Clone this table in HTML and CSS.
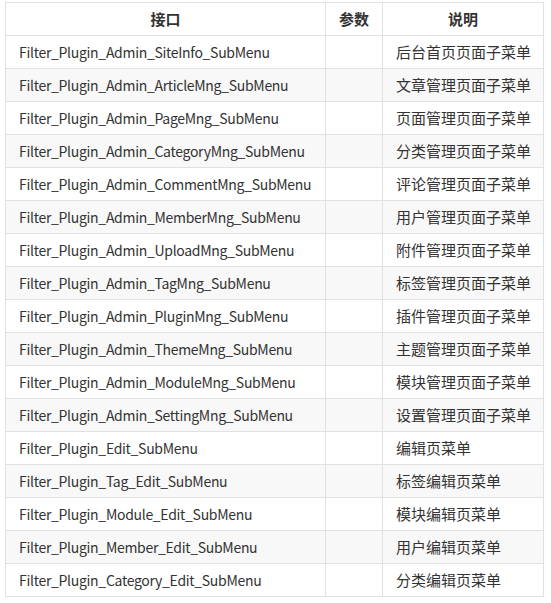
FILE: index.html
```html
<!DOCTYPE html>
<html lang="zh-CN">
<head>
    <meta charset="UTF-8">
    <meta name="viewport" content="width=device-width, initial-scale=1.0">
    <title>Filter Plugin SubMenu</title>
    <link rel="stylesheet" href="styles.css">
</head>
<body>
    <table class="api">
        <thead>
            <tr>
                <th class="col-name">接口</th>
                <th class="col-param">参数</th>
                <th class="col-desc">说明</th>
            </tr>
        </thead>
        <tbody>
            <tr><td>Filter_Plugin_Admin_SiteInfo_SubMenu</td><td></td><td>后台首页页面子菜单</td></tr>
            <tr><td>Filter_Plugin_Admin_ArticleMng_SubMenu</td><td></td><td>文章管理页面子菜单</td></tr>
            <tr><td>Filter_Plugin_Admin_PageMng_SubMenu</td><td></td><td>页面管理页面子菜单</td></tr>
            <tr><td>Filter_Plugin_Admin_CategoryMng_SubMenu</td><td></td><td>分类管理页面子菜单</td></tr>
            <tr><td>Filter_Plugin_Admin_CommentMng_SubMenu</td><td></td><td>评论管理页面子菜单</td></tr>
            <tr><td>Filter_Plugin_Admin_MemberMng_SubMenu</td><td></td><td>用户管理页面子菜单</td></tr>
            <tr><td>Filter_Plugin_Admin_UploadMng_SubMenu</td><td></td><td>附件管理页面子菜单</td></tr>
            <tr><td>Filter_Plugin_Admin_TagMng_SubMenu</td><td></td><td>标签管理页面子菜单</td></tr>
            <tr><td>Filter_Plugin_Admin_PluginMng_SubMenu</td><td></td><td>插件管理页面子菜单</td></tr>
            <tr><td>Filter_Plugin_Admin_ThemeMng_SubMenu</td><td></td><td>主题管理页面子菜单</td></tr>
            <tr><td>Filter_Plugin_Admin_ModuleMng_SubMenu</td><td></td><td>模块管理页面子菜单</td></tr>
            <tr><td>Filter_Plugin_Admin_SettingMng_SubMenu</td><td></td><td>设置管理页面子菜单</td></tr>
            <tr><td>Filter_Plugin_Edit_SubMenu</td><td></td><td>编辑页菜单</td></tr>
            <tr><td>Filter_Plugin_Tag_Edit_SubMenu</td><td></td><td>标签编辑页菜单</td></tr>
            <tr><td>Filter_Plugin_Module_Edit_SubMenu</td><td></td><td>模块编辑页菜单</td></tr>
            <tr><td>Filter_Plugin_Member_Edit_SubMenu</td><td></td><td>用户编辑页菜单</td></tr>
            <tr><td>Filter_Plugin_Category_Edit_SubMenu</td><td></td><td>分类编辑页菜单</td></tr>
        </tbody>
    </table>
</body>
</html>
```

FILE: styles.css
```css
html,
body {
    margin: 0;
    padding: 0;
    background: #fff;
    font-family: "Noto Sans CJK SC", "Noto Sans", sans-serif;
}

.api {
    margin: 2px 0 0 5px;
    border-collapse: collapse;
    table-layout: fixed;
    width: 538px;
    font-size: 15px;
    color: #333;
}

.api th,
.api td {
    border: 1px solid #dfe2e5;
    padding: 6px 13px;
    line-height: 20px;
    height: 20px;
    text-align: left;
    white-space: nowrap;
    overflow: hidden;
}

.api td:first-child {
    font-size: 14px;
    letter-spacing: -0.3px;
}

.api th {
    font-weight: bold;
    text-align: center;
}

.col-name {
    width: 293px;
}

.col-param {
    width: 30px;
}

.col-desc {
    width: 134px;
}

.api tbody tr:nth-child(even) {
    background: #f8f8f8;
}
```
